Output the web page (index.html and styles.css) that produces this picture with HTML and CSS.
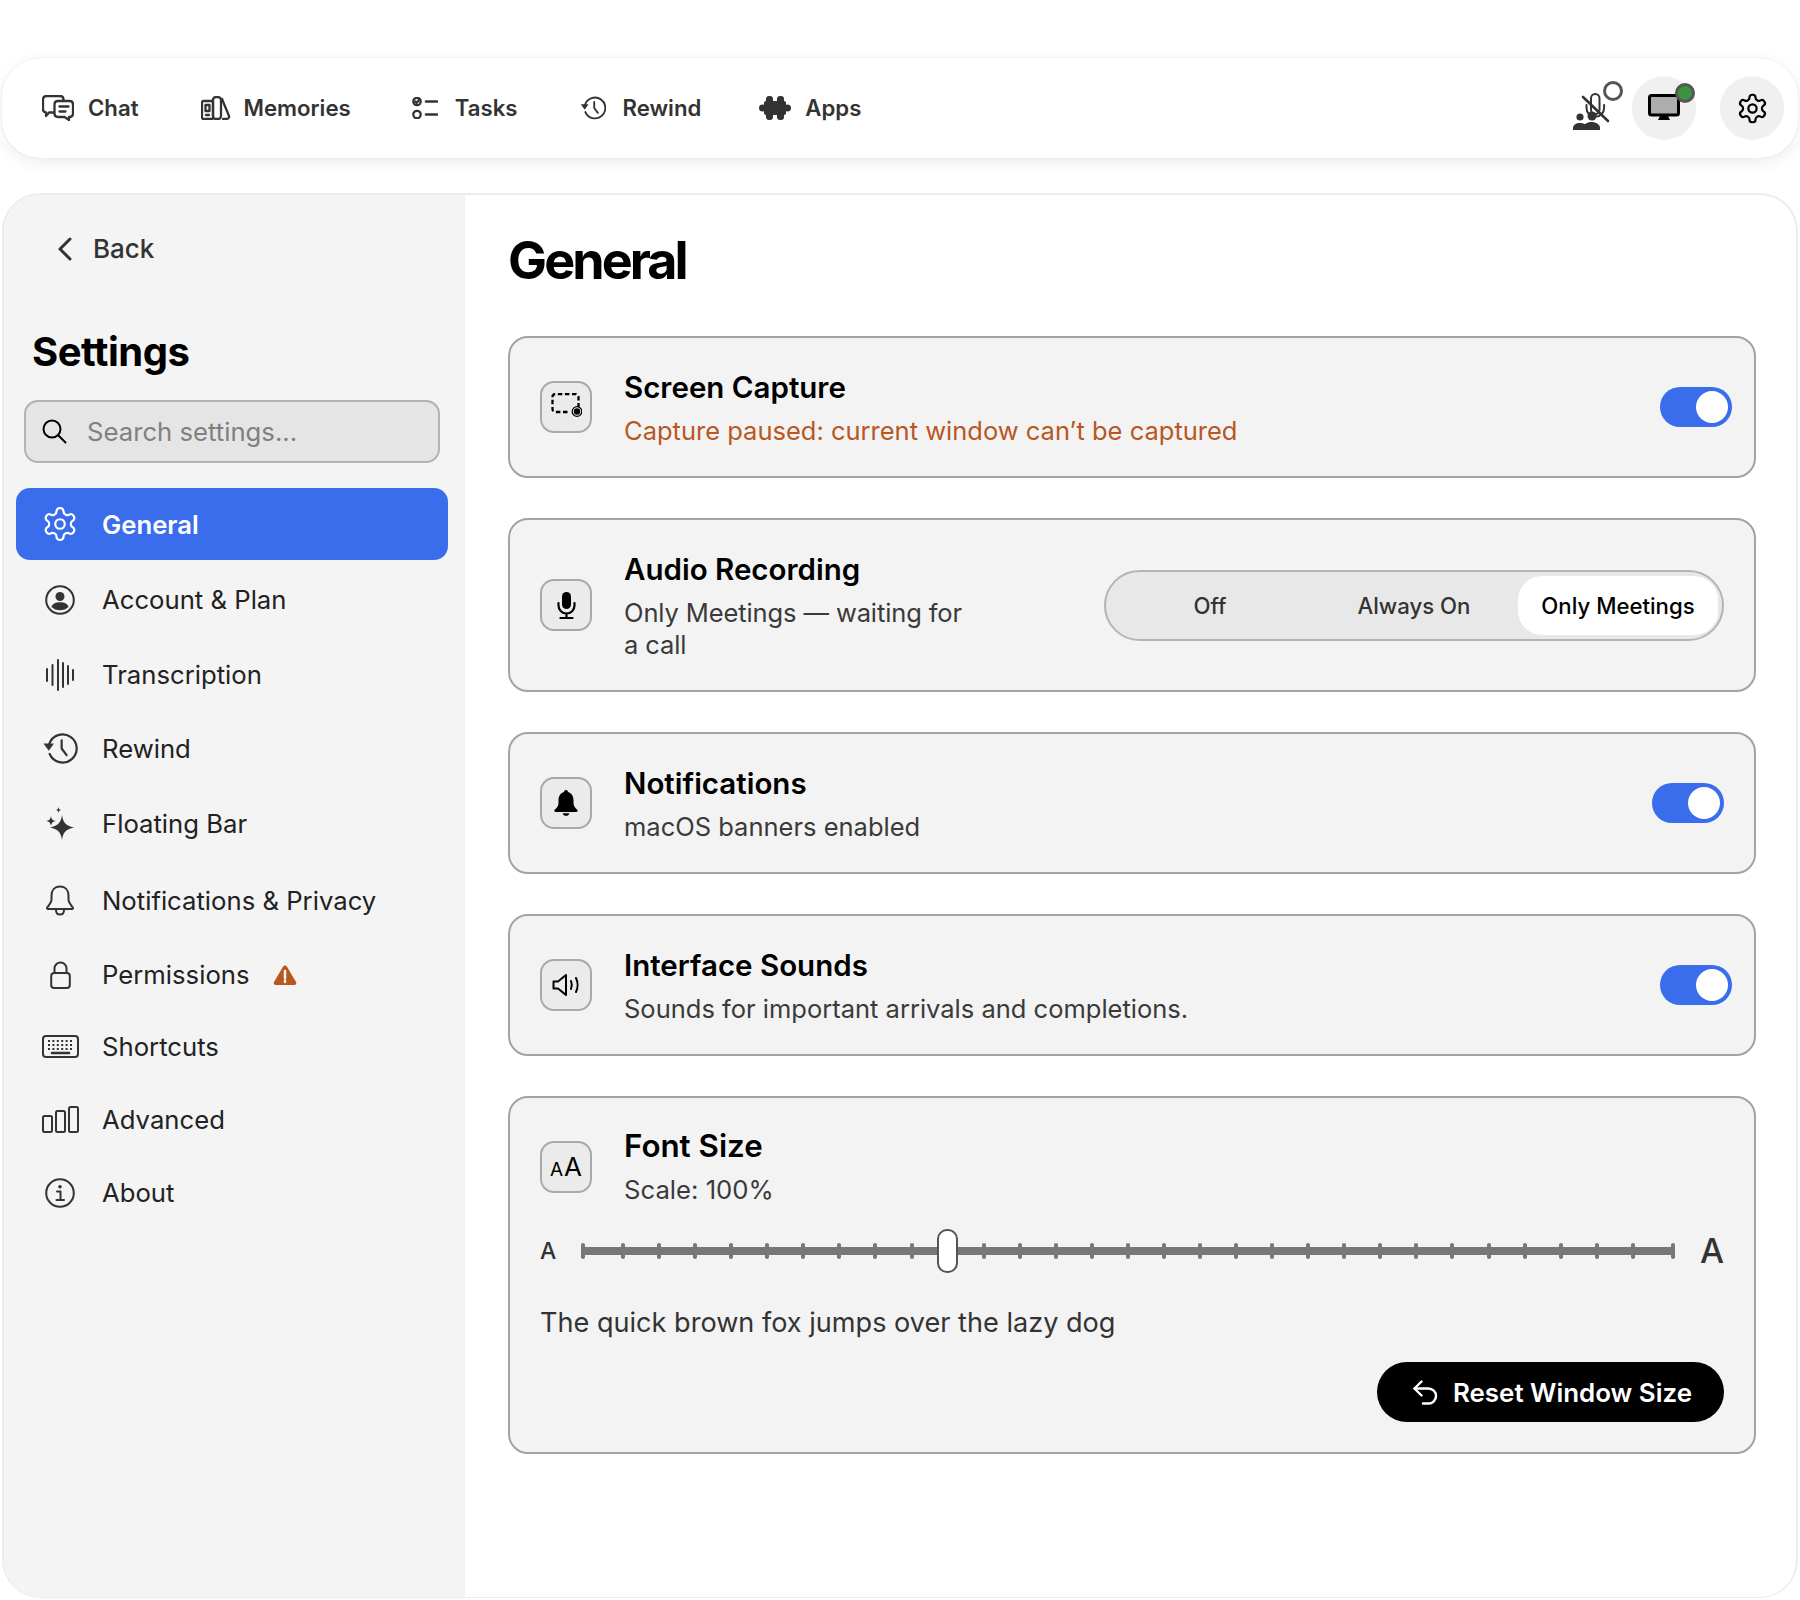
FILE: index.html
```html
<!DOCTYPE html>
<html lang="en">
<head>
<meta charset="utf-8">
<title>Settings</title>
<link rel="stylesheet" href="styles.css">
</head>
<body>
<svg class="defs" width="0" height="0" aria-hidden="true">
  <symbol id="gear" viewBox="0 0 24 24"><path d="M12.22 2h-.44a2 2 0 0 0-2 2v.18a2 2 0 0 1-1 1.73l-.43.25a2 2 0 0 1-2 0l-.15-.08a2 2 0 0 0-2.73.73l-.22.38a2 2 0 0 0 .73 2.73l.15.1a2 2 0 0 1 1 1.72v.51a2 2 0 0 1-1 1.74l-.15.09a2 2 0 0 0-.73 2.73l.22.38a2 2 0 0 0 2.73.73l.15-.08a2 2 0 0 1 2 0l.43.25a2 2 0 0 1 1 1.73V20a2 2 0 0 0 2 2h.44a2 2 0 0 0 2-2v-.18a2 2 0 0 1 1-1.73l.43-.25a2 2 0 0 1 2 0l.15.08a2 2 0 0 0 2.73-.73l.22-.39a2 2 0 0 0-.73-2.73l-.15-.08a2 2 0 0 1-1-1.74v-.5a2 2 0 0 1 1-1.74l.15-.09a2 2 0 0 0 .73-2.73l-.22-.38a2 2 0 0 0-2.73-.73l-.15.08a2 2 0 0 1-2 0l-.43-.25a2 2 0 0 1-1-1.73V4a2 2 0 0 0-2-2z"/><circle cx="12" cy="12" r="3"/></symbol>
  <symbol id="clock" viewBox="0 0 32 30"><path d="M6.200 11A12.800 12.800 0 1 1 6.600 20"/><path class="fl" d="M1 10.500h9.500L5.800 17z"/><path d="M17.500 7.500V15l4.500 6"/></symbol>
</svg>

<div class="app">
  <header class="topbar">
    <nav class="topnav">
      <a class="tab tab-chat"><svg class="ic" width="32" height="26" viewBox="0 0 32 26"><path d="M12 17.500H7l-3 3.500v-3.500C2 17.500 1 16 1 14V4.500C1 2.500 2.500 1 4.500 1H18c2 0 3.500 1.500 3.500 3.500V6"/><path d="M16 6h11.500c2 0 3.500 1.500 3.500 3.500v9c0 2-1.500 3.500-3.500 3.500H27v3l-4.500-3H16c-2 0-3.500-1.500-3.500-3.500v-9C12.500 7.500 14 6 16 6z"/><path d="M17.500 11.500h9M17.500 16.500h6"/></svg><span>Chat</span></a>
      <a class="tab tab-mem"><svg class="ic" width="30" height="24" viewBox="0 0 30 24"><rect x="1" y="5" width="11" height="18" rx="1.500"/><rect x="4.500" y="9" width="4" height="6"/><path d="M5 19h3"/><rect x="12" y="1" width="8" height="22" rx="3"/><path d="M21 3l7 17c.5 2-1 3-3 3h-3"/></svg><span>Memories</span></a>
      <a class="tab tab-tasks"><svg class="ic" width="26" height="22" viewBox="0 0 26 22"><circle cx="5" cy="4.500" r="3.700"/><path d="M3.200 4.500l1.400 1.500 2.400-3"/><circle cx="5" cy="17.500" r="3.700"/><path class="thick" d="M14 4.500h11M14 17.500h11"/></svg><span>Tasks</span></a>
      <a class="tab tab-rw"><svg class="ic" width="26" height="26"><use href="#clock"/></svg><span>Rewind</span></a>
      <a class="tab tab-apps"><svg class="fl" width="32" height="24" viewBox="0 0 32 24"><rect x="5" y="5" width="22" height="14" rx="2"/><circle cx="3.500" cy="12" r="3.500"/><circle cx="28.500" cy="12" r="3.500"/><rect x="7" y="0" width="7" height="24" rx="3"/><rect x="18" y="0" width="7" height="24" rx="3"/></svg><span>Apps</span></a>
    </nav>
    <div class="status">
      <div class="status-mic">
        <svg class="ic mic-off" width="38" height="38" viewBox="0 0 38 38"><rect x="19" y="1" width="8.500" height="20" rx="4.200"/><path d="M14.500 12v3a8.800 8.800 0 0 0 17.600 0v-3"/><circle class="fl" cx="8" cy="24" r="3.600"/><path class="fl" d="M1 37v-2c0-3 3-5 7-5s6 1.500 7 3l-1.500 4z"/><circle class="fl" cx="20" cy="23" r="4.500"/><path class="fl" d="M11 37v-2c0-3.500 4-6 8.500-6s8.500 2.500 8.500 6v2z"/><path class="slash" d="M11 4l25 24"/></svg>
        <span class="ring"></span>
      </div>
      <button class="round">
        <svg width="32" height="28" viewBox="0 0 32 28"><rect class="mon" x="1.500" y="1.500" width="29" height="19.500" rx="2"/><path class="fl" d="M12 22h8l2 4H10z"/></svg>
        <span class="ring ring-on"></span>
      </button>
      <button class="round"><svg class="ic ic-black gear-top" width="33" height="33"><use href="#gear"/></svg></button>
    </div>
  </header>

  <main class="panel">
    <aside class="sidebar">
      <a class="back"><svg class="ic chev" width="14" height="24" viewBox="0 0 14 24"><path class="thick" d="M12 2L2 12l10 10"/></svg><span>Back</span></a>
      <h2 class="side-title">Settings</h2>
      <div class="search">
        <svg class="ic ic-black" width="25" height="25" viewBox="0 0 25 25"><circle cx="10" cy="10" r="8.500"/><path d="M16.500 16.500l7 7"/></svg>
        <span>Search settings...</span>
      </div>
      <ul class="menu">
        <li class="row row-active"><span class="ri"><svg class="ic ic-white gear-side" width="38" height="38"><use href="#gear"/></svg></span><span>General</span></li>
        <li class="row r75 row-first"><span class="ri"><svg class="ic" width="30" height="30" viewBox="0 0 30 30"><circle cx="15" cy="15" r="13.800"/><circle class="fl" cx="15" cy="11.500" r="4.500"/><path class="fl" d="M6.500 22c1-3.500 4.500-4.800 8.500-4.800s7.500 1.300 8.500 4.800c-2 2-5 3.300-8.500 3.300S8.500 24 6.500 22z"/></svg></span><span>Account &amp; Plan</span></li>
        <li class="row r75"><span class="ri"><svg class="ic" width="28" height="32" viewBox="0 0 28 32"><path d="M1 10v12M6.500 6v20M12 1v30M17 4v24M22 7v18M27 11v10"/></svg></span><span>Transcription</span></li>
        <li class="row r72"><span class="ri"><svg class="ic" width="36" height="33"><use href="#clock"/></svg></span><span>Rewind</span></li>
        <li class="row r79"><span class="ri"><svg class="fl" width="28" height="33" viewBox="0 0 28 33"><path d="M16 8c1 7.500 3.500 10.500 12 12.500-8.500 2-11 5-12 12.500-1-7.500-3.500-10.500-12-12.500C12.500 18.500 15 15.500 16 8z"/><path d="M5 9c.4 3 1.600 4.400 5 5-3.400.6-4.600 2-5 5-.4-3-1.600-4.400-5-5 3.400-.6 4.600-2 5-5z"/><path d="M12.500 0c.3 2 .9 2.700 3 3-2.100.3-2.700 1-3 3-.3-2-.9-2.700-3-3 2.100-.3 2.700-1 3-3z"/></svg></span><span>Floating Bar</span></li>
        <li class="row r75"><span class="ri"><svg class="ic" width="28" height="31" viewBox="0 0 28 31"><path d="M14 1.500c-5.500 0-8.500 4-8.500 9v4c0 3-2.500 5.500-4.300 8-.6.900 0 1.500 1 1.500h23.600c1 0 1.600-.6 1-1.500-1.800-2.500-4.300-5-4.300-8v-4c0-5-3-9-8.500-9z"/><path d="M10 25c0 3 1.800 4.500 4 4.500s4-1.500 4-4.500"/></svg></span><span>Notifications &amp; Privacy</span></li>
        <li class="row r73"><span class="ri"><svg class="ic" width="21" height="28" viewBox="0 0 21 28"><rect x="1.200" y="12" width="18.600" height="15" rx="3"/><path d="M4.500 12V7.500a6 6 0 0 1 12 0V12"/></svg></span><span>Permissions</span><svg class="warn" width="24" height="22" viewBox="0 0 24 22"><path class="warn-body" d="M12 1.500c-.8 0-1.500.5-2 1.300L1 18c-.9 1.600.1 3 1.800 3h18.400c1.700 0 2.700-1.400 1.800-3L14 2.800c-.5-.8-1.200-1.300-2-1.300z"/><path class="warn-mark" d="M12 7v7M12 16.500v1.500"/></svg></li>
        <li class="row r71"><span class="ri"><svg class="ic" width="37" height="23" viewBox="0 0 37 23"><rect x="1" y="1" width="35" height="21" rx="3"/><path class="keys" d="M6 6h25M6 10h25M6 14h25"/><path class="thick" d="M10 18h17"/></svg></span><span>Shortcuts</span></li>
        <li class="row r74"><span class="ri"><svg class="ic" width="37" height="27" viewBox="0 0 37 27"><rect x="1" y="10" width="9" height="16" rx="1.500"/><rect x="14" y="5" width="9" height="21" rx="1.500"/><rect x="27" y="1" width="9" height="25" rx="1.500"/></svg></span><span>Advanced</span></li>
        <li class="row r73"><span class="ri"><svg class="ic" width="30" height="30" viewBox="0 0 30 30"><circle cx="15" cy="15" r="13.800"/><circle class="fl" cx="15" cy="8.800" r="1.800"/><path d="M12 13.500h3.500V22M11.500 22h7.500"/></svg></span><span>About</span></li>
      </ul>
    </aside>

    <section class="content">
      <h1 class="page-title">General</h1>

      <article class="card card-tight">
        <div class="box"><svg class="ic ic-black screen-ic" width="31" height="28" viewBox="0 0 30 28"><path class="dash" d="M16 19H4a3 3 0 0 1-3-3V4a3 3 0 0 1 3-3h20a3 3 0 0 1 3 3v12"/><circle class="ring-dot" cx="25.500" cy="18.500" r="4.800"/><circle class="fl" cx="25.500" cy="18.500" r="3.200"/></svg></div>
        <div class="txt"><h3>Screen Capture</h3><p class="warn-text">Capture paused: current window can’t be captured</p></div>
        <span class="toggle"><span class="knob"></span></span>
      </article>

      <article class="card card-audio">
        <div class="box"><svg class="fl ic-fill" width="19" height="27" viewBox="0 0 19 27"><rect x="5" y="0" width="9" height="17" rx="4.500"/><path class="open" d="M1.500 11v2.500a8 8 0 0 0 16 0V11M9.500 21.500V26M3.500 26h12"/></svg></div>
        <div class="txt txt-narrow"><h3>Audio Recording</h3><p>Only Meetings — waiting for a call</p></div>
        <div class="segment">
          <span class="seg">Off</span>
          <span class="seg">Always On</span>
          <span class="seg seg-on">Only Meetings</span>
        </div>
      </article>

      <article class="card">
        <div class="box"><svg class="fl ic-fill" width="24" height="26" viewBox="0 0 24 26"><path d="M12 0c-1.200 0-2 .8-2 1.900C6.300 3 4.500 6.200 4.500 10v3.500c0 2.500-2 4.500-3.800 6.300-.9 1-.3 2.200 1 2.200h20.600c1.300 0 1.900-1.200 1-2.200-1.800-1.800-3.800-3.800-3.800-6.300V10c0-3.800-1.800-7-5.500-8.100C14 .8 13.200 0 12 0z"/><path d="M8.500 23.200h7c-.5 1.700-1.900 2.600-3.500 2.600s-3-.9-3.500-2.600z"/></svg></div>
        <div class="txt"><h3>Notifications</h3><p>macOS banners enabled</p></div>
        <span class="toggle"><span class="knob"></span></span>
      </article>

      <article class="card card-tight">
        <div class="box"><svg class="ic ic-black" width="28" height="24" viewBox="0 0 28 24"><path d="M1.500 8.500v7h4.500l8 6.500V2L6 8.500z"/><path d="M19 8c1 2.500 1 5.500 0 8M24 5c2 4 2 10 0 14"/></svg></div>
        <div class="txt"><h3>Interface Sounds</h3><p>Sounds for important arrivals and completions.</p></div>
        <span class="toggle"><span class="knob"></span></span>
      </article>

      <article class="card card-col">
        <div class="card-head">
          <div class="box box-aa"><span class="aa-s">A</span><span class="aa-l">A</span></div>
          <div class="txt"><h3 class="title-lg">Font Size</h3><p class="sub-lg">Scale: 100%</p></div>
        </div>
        <div class="slider">
          <span class="a-s">A</span>
          <div class="track">
            <i class="tick"></i>
            <div class="ticks"><i class="tick"></i><i class="tick"></i><i class="tick"></i><i class="tick"></i><i class="tick"></i><i class="tick"></i><i class="tick"></i><i class="tick"></i><i class="tick"></i><i class="tick"></i><i class="tick"></i><i class="tick"></i><i class="tick"></i><i class="tick"></i><i class="tick"></i><i class="tick"></i><i class="tick"></i><i class="tick"></i><i class="tick"></i><i class="tick"></i><i class="tick"></i><i class="tick"></i><i class="tick"></i><i class="tick"></i><i class="tick"></i><i class="tick"></i><i class="tick"></i><i class="tick"></i><i class="tick"></i></div>
            <i class="tick"></i>
            <span class="thumb"></span>
          </div>
          <span class="a-l">A</span>
        </div>
        <p class="preview">The quick brown fox jumps over the lazy dog</p>
        <div class="foot">
          <button class="reset"><svg class="ic ic-white reset-ic" width="26" height="25" viewBox="0 0 26 25"><path d="M9.500 1.500L2.500 8.500l7 7"/><path d="M2.500 8.500h14a7.500 7.500 0 0 1 0 15H11"/></svg><span>Reset Window Size</span></button>
        </div>
      </article>
    </section>
  </main>
</div>
</body>
</html>
```
FILE: styles.css
```css
* { box-sizing: border-box; }
html, body { margin: 0; padding: 0; background: #fff; }
body { font-family: Inter, "Liberation Sans", sans-serif; color: #333; }
.defs { position: absolute; }
h1, h2, h3, p, ul { margin: 0; padding: 0; }
ul { list-style: none; }
button { font: inherit; border: 0; padding: 0; }

svg { display: block; flex: none; }
.ic, .ic use { fill: none; stroke: #333; stroke-width: 2; stroke-linecap: round; stroke-linejoin: round; }
.ic-black, .ic-black use { stroke: #000; }
.ic-white, .ic-white use { stroke: #fff; }
.fl { fill: #333; stroke: none; }
.ic .fl { fill: #333; stroke: none; }
.ic .thick { stroke-width: 2.600; }
.ic-black .fl { fill: #000; }
.gear-top, .gear-top use { stroke-width: 1.600; }
.gear-side, .gear-side use { stroke-width: 1.400; }
.tab .ic, .tab .ic use { stroke-width: 2.300; }
.reset-ic { stroke-width: 2.400; }
.screen-ic .dash { stroke-width: 2.300; }

.app { width: 1800px; height: 1600px; padding: 58px 2px 2px; display: flex; flex-direction: column; gap: 35px; }

/* top bar */
.topbar { height: 100px; flex: none; display: flex; align-items: center; justify-content: space-between; padding: 0 14px 0 40px; background: #fff; border-radius: 38px; box-shadow: 0 0 2px rgba(0,0,0,.1), 0 5px 16px rgba(0,0,0,.07); }
.topnav { display: flex; align-items: center; }
.tab { display: flex; align-items: center; gap: 14px; font-size: 22.200px; font-weight: 560; line-height: 30px; color: #333; }
.tab-mem { margin-left: 62px; gap: 13px; }
.tab-tasks { margin-left: 61px; gap: 17px; }
.tab-rw { margin-left: 62px; gap: 17px; }
.tab-apps { margin-left: 58px; gap: 14px; }
.status { display: flex; align-items: center; gap: 24px; }
.status-mic { position: relative; width: 42px; height: 64px; display: flex; align-items: flex-end; justify-content: flex-end; padding-bottom: 9px; margin-right: -2px; }
.mic-off rect, .mic-off path { stroke-width: 2; }
.mic-off .slash { stroke: #333; stroke-width: 2.600; }
.ring { position: absolute; width: 20px; height: 20px; border: 3px solid #555; border-radius: 50%; background: #fff; right: -13px; top: 5px; }
.round { position: relative; width: 64px; height: 64px; border-radius: 50%; background: #f0f0f0; display: flex; align-items: center; justify-content: center; }
.round .ring-on { background: #3f9142; right: 1px; top: 7px; }
.mon { fill: #adadad; stroke: #000; stroke-width: 3; }
.round .fl { fill: #000; }

/* panel */
.panel { flex: 1; display: flex; border: 2px solid #ececec; border-bottom-width: 1px; border-radius: 38px; overflow: hidden; background: #fff; }
.sidebar { width: 461px; flex: none; background: #f4f4f4; padding: 38px 17px 0 12px; }
.back { display: flex; align-items: center; gap: 21px; margin-left: 42px; font-size: 26px; font-weight: 500; line-height: 32px; color: #333; }
.chev .thick { stroke-width: 3; }
.side-title { margin: 62px 0 0 16px; font-size: 40px; line-height: 50px; font-weight: 700; color: #000; letter-spacing: -.5px; }
.search { display: flex; align-items: center; gap: 20px; height: 63px; margin: 23px 8px 0 8px; padding-left: 16px; background: #e5e5e5; border: 2px solid #b2b2b2; border-radius: 14px; font-size: 25.700px; color: #808080; }
.menu { margin-top: 25px; }
.row { display: flex; align-items: center; font-size: 25.700px; font-weight: 400; color: #222; border-radius: 14px; padding-left: 24px; }
.row > span:nth-child(2) { margin-left: 22px; }
.ri { width: 40px; height: 32px; display: flex; align-items: center; justify-content: center; flex: none; }
.row-active { height: 72px; background: #396deb; color: #fff; font-weight: 600; }
.row-first { margin-top: 2px; }
.r71 { height: 71px; }
.r72 { height: 72px; }
.r73 { height: 73px; }
.r74 { height: 74px; }
.r75 { height: 75px; }
.r79 { height: 79px; }
.warn { margin-left: 23px; }
.warn-body { fill: #b9571f; }
.warn-mark { stroke: #fff; stroke-width: 2.500; fill: none; stroke-linecap: round; }
.keys { stroke-dasharray: 2 2.400; stroke-linecap: butt; stroke-width: 2; }

/* content */
.content { flex: 1; padding: 34px 40px 0 43px; display: flex; flex-direction: column; }
.page-title { font-size: 52px; line-height: 64px; font-weight: 700; color: #000; letter-spacing: -2.900px; margin-bottom: 43px; }
.card { display: flex; align-items: center; min-height: 142px; border: 2px solid #a3a3a3; border-radius: 20px; background: #f3f3f3; padding: 0 30px 0 30px; margin-bottom: 40px; }
.card-audio { min-height: 174px; }
.card-tight { padding-right: 22px; }
.card-col { display: block; padding: 30px 30px 30px 30px; margin-bottom: 0; }
.card-head { display: flex; align-items: center; }
.box { width: 52px; height: 52px; flex: none; display: flex; align-items: center; justify-content: center; background: #ebebeb; border: 2px solid #a9a9a9; border-radius: 14px; }
.box .dash { stroke-dasharray: 4.500 2.600; stroke-linecap: butt; }
.box .ring-dot { stroke-width: 1.300; fill: #ebebeb; }
.ic-fill { fill: #000; }
.ic-fill .open { fill: none; stroke: #000; stroke-width: 2.200; stroke-linecap: round; }
.txt { margin-left: 32px; padding-top: 1px; flex: 1; }
.card-head .txt { padding-top: 0; }
.txt-narrow { flex: none; width: 350px; }
.txt-narrow p { letter-spacing: -.11px; }
.txt h3 { font-size: 29.500px; line-height: 36px; font-weight: 600; color: #000; }
.txt p { font-size: 25.500px; line-height: 32px; margin-top: 10px; color: #3a3a3a; }
.txt .title-lg { font-size: 31.300px; }
.txt .sub-lg { font-size: 25.700px; }
.txt .warn-text { color: #b9571f; }
.toggle { width: 72px; height: 40px; flex: none; display: flex; align-items: center; justify-content: flex-end; padding-right: 4px; background: #396deb; border-radius: 20px; }
.knob { width: 32px; height: 32px; border-radius: 50%; background: #fff; }

.segment { margin-left: auto; width: 620px; height: 71px; flex: none; display: flex; gap: 4px; padding: 4px; background: #e8e8e8; border: 2px solid #b4b4b4; border-radius: 36px; }
.seg { width: 200px; display: flex; align-items: center; justify-content: center; font-size: 22.200px; font-weight: 500; color: #333; border-radius: 24px; }
.seg-on { background: #fff; color: #000; }

.box-aa { align-items: baseline; padding-top: 11px; color: #000; line-height: 1; gap: 1px; }
.aa-s { font-size: 19px; }
.aa-l { font-size: 26px; }

.slider { display: flex; align-items: center; margin-top: 23px; height: 43px; }
.a-s { font-size: 23px; font-weight: 500; width: 41px; }
.track { position: relative; flex: none; width: 1094px; height: 8px; display: flex; align-items: center; background: #777; }
.ticks { flex: 1; display: flex; justify-content: space-between; margin: 0 36px; }
.tick { display: block; width: 4px; height: 16px; background: #777; border-radius: 2px; flex: none; }
.thumb { position: absolute; left: 356px; top: -18px; width: 21px; height: 44px; background: #fff; border: 2px solid #555; border-radius: 10px; }
.a-l { font-size: 34px; font-weight: 500; margin-left: auto; line-height: 1; }
.preview { margin-top: 33px; font-size: 27.100px; line-height: 36px; color: #333; }
.foot { display: flex; justify-content: flex-end; margin-top: 21px; }
.reset { height: 60px; width: 347px; display: flex; align-items: center; gap: 15px; padding-left: 35px; border-radius: 30px; background: #000; color: #fff; font-size: 25.900px; font-weight: 600; }
```
